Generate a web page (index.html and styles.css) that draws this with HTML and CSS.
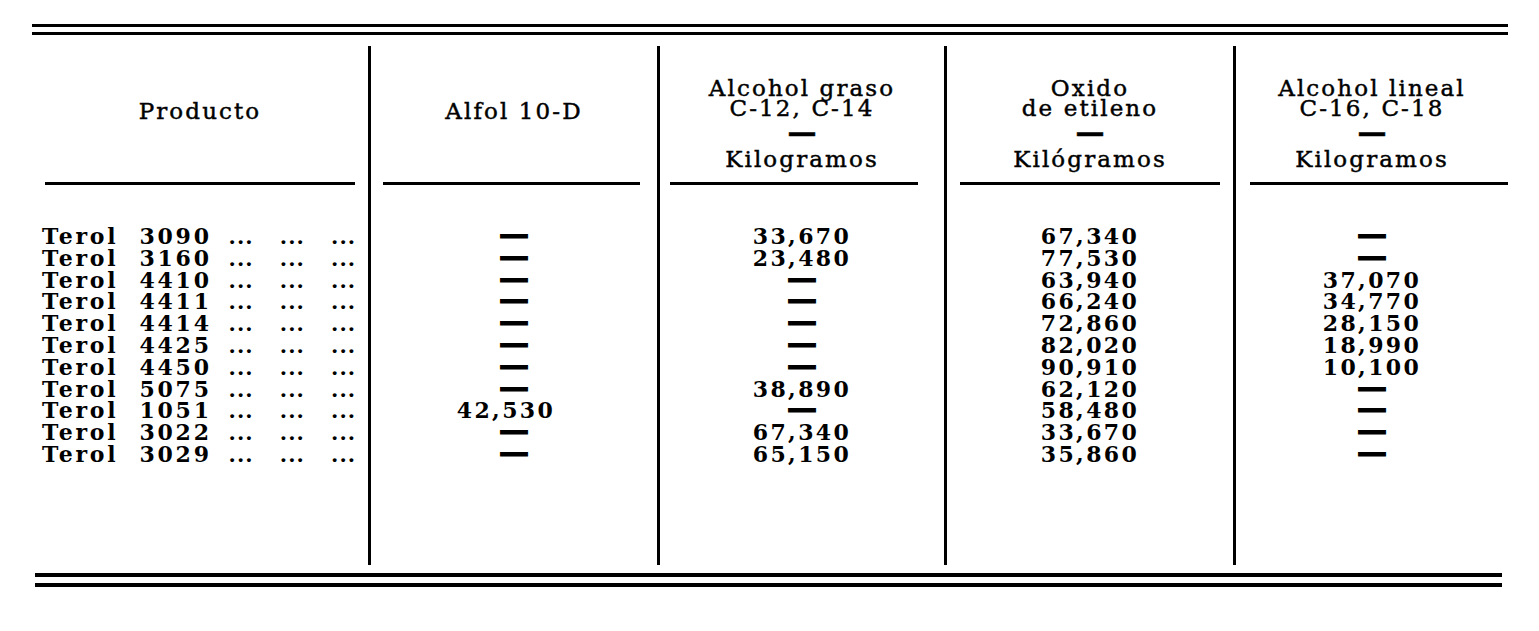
FILE: index.html
```html
<!DOCTYPE html>
<html lang="es">
<head>
<meta charset="utf-8">
<title>Terol</title>
<link rel="stylesheet" href="styles.css">
</head>
<body>
<div class="page">
  <div class="double top"><div class="rule"></div><div class="rule"></div></div>
  <div class="table">
    <div class="cell head c1"><div class="htext single">Producto</div><div class="hrule"></div></div>
    <div class="cell head c2"><div class="htext single">Alfol 10-D</div><div class="hrule"></div></div>
    <div class="cell head c3"><div class="htext">Alcohol graso<br>C-12, C-14</div><div class="hdash">—</div><div class="hunit">Kilogramos</div><div class="hrule"></div></div>
    <div class="cell head c4"><div class="htext">Oxido<br>de etileno</div><div class="hdash">—</div><div class="hunit">Kilógramos</div><div class="hrule"></div></div>
    <div class="cell head c5"><div class="htext">Alcohol lineal<br>C-16, C-18</div><div class="hdash">—</div><div class="hunit">Kilogramos</div><div class="hrule"></div></div>

    <div class="cell name first"><span class="prod">Terol&nbsp; 3090</span><span class="dots">... ... ...</span></div>
    <div class="cell num c2 first"><span class="nil">—</span></div>
    <div class="cell num c3 first"><span class="v">33,670</span></div>
    <div class="cell num c4 first"><span class="v">67,340</span></div>
    <div class="cell num c5 first"><span class="nil">—</span></div>

    <div class="cell name"><span class="prod">Terol&nbsp; 3160</span><span class="dots">... ... ...</span></div>
    <div class="cell num c2"><span class="nil">—</span></div>
    <div class="cell num c3"><span class="v">23,480</span></div>
    <div class="cell num c4"><span class="v">77,530</span></div>
    <div class="cell num c5"><span class="nil">—</span></div>

    <div class="cell name"><span class="prod">Terol&nbsp; 4410</span><span class="dots">... ... ...</span></div>
    <div class="cell num c2"><span class="nil">—</span></div>
    <div class="cell num c3"><span class="nil">—</span></div>
    <div class="cell num c4"><span class="v">63,940</span></div>
    <div class="cell num c5"><span class="v">37,070</span></div>

    <div class="cell name"><span class="prod">Terol&nbsp; 4411</span><span class="dots">... ... ...</span></div>
    <div class="cell num c2"><span class="nil">—</span></div>
    <div class="cell num c3"><span class="nil">—</span></div>
    <div class="cell num c4"><span class="v">66,240</span></div>
    <div class="cell num c5"><span class="v">34,770</span></div>

    <div class="cell name"><span class="prod">Terol&nbsp; 4414</span><span class="dots">... ... ...</span></div>
    <div class="cell num c2"><span class="nil">—</span></div>
    <div class="cell num c3"><span class="nil">—</span></div>
    <div class="cell num c4"><span class="v">72,860</span></div>
    <div class="cell num c5"><span class="v">28,150</span></div>

    <div class="cell name"><span class="prod">Terol&nbsp; 4425</span><span class="dots">... ... ...</span></div>
    <div class="cell num c2"><span class="nil">—</span></div>
    <div class="cell num c3"><span class="nil">—</span></div>
    <div class="cell num c4"><span class="v">82,020</span></div>
    <div class="cell num c5"><span class="v">18,990</span></div>

    <div class="cell name"><span class="prod">Terol&nbsp; 4450</span><span class="dots">... ... ...</span></div>
    <div class="cell num c2"><span class="nil">—</span></div>
    <div class="cell num c3"><span class="nil">—</span></div>
    <div class="cell num c4"><span class="v">90,910</span></div>
    <div class="cell num c5"><span class="v">10,100</span></div>

    <div class="cell name"><span class="prod">Terol&nbsp; 5075</span><span class="dots">... ... ...</span></div>
    <div class="cell num c2"><span class="nil">—</span></div>
    <div class="cell num c3"><span class="v">38,890</span></div>
    <div class="cell num c4"><span class="v">62,120</span></div>
    <div class="cell num c5"><span class="nil">—</span></div>

    <div class="cell name"><span class="prod">Terol&nbsp; 1051</span><span class="dots">... ... ...</span></div>
    <div class="cell num c2 left"><span class="v">42,530</span></div>
    <div class="cell num c3"><span class="nil">—</span></div>
    <div class="cell num c4"><span class="v">58,480</span></div>
    <div class="cell num c5"><span class="nil">—</span></div>

    <div class="cell name"><span class="prod">Terol&nbsp; 3022</span><span class="dots">... ... ...</span></div>
    <div class="cell num c2"><span class="nil">—</span></div>
    <div class="cell num c3"><span class="v">67,340</span></div>
    <div class="cell num c4"><span class="v">33,670</span></div>
    <div class="cell num c5"><span class="nil">—</span></div>

    <div class="cell name last"><span class="prod">Terol&nbsp; 3029</span><span class="dots">... ... ...</span></div>
    <div class="cell num c2 last"><span class="nil">—</span></div>
    <div class="cell num c3 last"><span class="v">65,150</span></div>
    <div class="cell num c4 last"><span class="v">35,860</span></div>
    <div class="cell num c5 last"><span class="nil">—</span></div>
  </div>
  <div class="double bottom"><div class="rule"></div><div class="rule"></div></div>
</div>
</body>
</html>
```

FILE: styles.css
```css
html, body {
  margin: 0;
  padding: 0;
  background: #ffffff;
}

body {
  color: #000000;
  font-family: "DejaVu Serif", "Liberation Serif", serif;
}

.page {
  width: 1476px;
  margin-left: 32px;
  padding-top: 24px;
}

.double {
  display: flex;
  flex-direction: column;
}

.double .rule {
  height: 3px;
  background: #000;
}

.double.top {
  gap: 5px;
}

.double.bottom {
  gap: 6px;
  margin: 8px 6px 0 3px;
}

.double.bottom .rule {
  height: 4px;
}

.table {
  margin-top: 11px;
  display: grid;
  grid-template-columns: 336px 289px 287px 289px 275px;
}

.cell {
  box-sizing: border-box;
}

.c2, .c3, .c4, .c5 {
  border-left: 3px solid #000;
}

/* header */
.head {
  display: flex;
  flex-direction: column;
  align-items: center;
  height: 139px;
  padding-top: 32px;
  font-size: 23px;
  letter-spacing: 2.1px;
  line-height: 20px;
  text-align: center;
  -webkit-text-stroke: 0.45px #000;
}

.htext.single {
  padding-top: 23px;
}

.hdash {
  margin-top: 2px;
  height: 24px;
  line-height: 24px;
  font-size: 29px;
  font-weight: bold;
  letter-spacing: 0;
}

.hunit {
  margin-top: 5px;
  line-height: 20px;
}

.hrule {
  align-self: stretch;
  height: 3px;
  margin-top: auto;
  background: #000;
}

.c1 .hrule { margin-left: 13px; margin-right: 13px; }
.c2 .hrule { margin-left: 12px; margin-right: 17px; }
.c3 .hrule { margin-left: 10px; margin-right: 26px; }
.c4 .hrule { margin-left: 13px; margin-right: 13px; }
.c5 .hrule { margin-left: 14px; margin-right: 0; }

/* body */
.name, .num {
  font-size: 22px;
  font-weight: bold;
  line-height: 21.8px;
  letter-spacing: 2.4px;
}

.name {
  display: flex;
  padding-left: 10px;
  padding-right: 12px;
}

.prod, .v {
  display: inline-block;
  height: 21.8px;
}

.prod {
  letter-spacing: 2.8px;
}

.dots {
  display: inline-block;
  height: 21.8px;
  margin-left: auto;
  font-size: 21px;
  letter-spacing: 1px;
  word-spacing: 18px;
}

.num {
  text-align: center;
}

.num.left {
  padding-right: 16px;
}

.nil {
  display: inline-block;
  height: 8px;
  line-height: 8px;
  font-size: 30px;
  letter-spacing: 0;
  -webkit-text-stroke: 1.2px #000;
}

.first {
  padding-top: 41px;
}

.last {
  padding-bottom: 99px;
}
```
